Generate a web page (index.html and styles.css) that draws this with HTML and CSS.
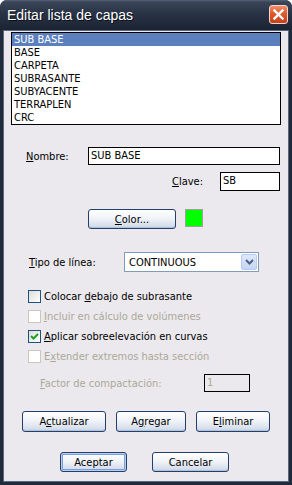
FILE: index.html
```html
<!doctype html>
<html lang="es">

<head>
  <meta charset="utf-8" />
  <title>Editar lista de capas</title>
  <link rel="stylesheet" href="styles.css">
</head>

<body>
  <div class="window">
    <div class="titlebar">
      <span class="title">Editar lista de capas</span>
      <span class="close">
        <svg width="11" height="11" viewBox="0 0 11 11">
          <path d="M1.5 1.5 L9.5 9.5 M9.5 1.5 L1.5 9.5" stroke="#fff" stroke-width="2.4" stroke-linecap="square" />
        </svg>
      </span>
    </div>

    <div class="client">
      <div class="listbox">
        <div class="item selected">SUB BASE</div>
        <div class="item">BASE</div>
        <div class="item">CARPETA</div>
        <div class="item">SUBRASANTE</div>
        <div class="item">SUBYACENTE</div>
        <div class="item">TERRAPLEN</div>
        <div class="item">CRC</div>
      </div>

      <div class="row row-nombre">
        <label class="lbl"><u>N</u>ombre:</label>
        <div class="field">SUB BASE</div>
      </div>

      <div class="row row-clave">
        <label class="lbl"><u>C</u>lave:</label>
        <div class="field">SB</div>
      </div>

      <div class="row row-color">
        <button class="btn btn-color"><u>C</u>olor...</button>
        <span class="swatch"></span>
      </div>

      <div class="row row-tipo">
        <label class="lbl"><u>T</u>ipo de línea:</label>
        <div class="combo">
          <span class="combo-text">CONTINUOUS</span>
          <span class="combo-btn">
            <svg width="9" height="6" viewBox="0 0 9 6">
              <path d="M1 1 L4.5 4.5 L8 1" fill="none" stroke="#4d6185" stroke-width="2" />
            </svg>
          </span>
        </div>
      </div>

      <div class="checks">
        <div class="check">
          <span class="box"></span>
          <span>Colocar <u>d</u>ebajo de subrasante</span>
        </div>
        <div class="check disabled">
          <span class="box"></span>
          <span><u>I</u>ncluir en cálculo de volúmenes</span>
        </div>
        <div class="check">
          <span class="box">
            <svg width="11" height="11" viewBox="0 0 11 11">
              <path d="M2 5 L4.5 7.5 L9 3" fill="none" stroke="#21a121" stroke-width="2" />
            </svg>
          </span>
          <span><u>A</u>plicar sobreelevación en curvas</span>
        </div>
        <div class="check disabled">
          <span class="box"></span>
          <span>E<u>x</u>tender extremos hasta sección</span>
        </div>
      </div>

      <div class="row row-factor disabled">
        <label class="lbl"><u>F</u>actor de compactación:</label>
        <div class="field">1</div>
      </div>

      <div class="row row-actions">
        <button class="btn btn-actualizar">A<u>c</u>tualizar</button>
        <button class="btn btn-agregar">A<u>g</u>regar</button>
        <button class="btn btn-eliminar">E<u>l</u>iminar</button>
      </div>

      <div class="row row-bottom">
        <button class="btn btn-default btn-aceptar">Aceptar</button>
        <button class="btn btn-cancelar">Cancelar</button>
      </div>
    </div>
  </div>
</body>

</html>
```

FILE: styles.css
```css
html,
body {
  margin: 0;
  height: 100%;
}

body {
  font-family: "DejaVu Sans Condensed", "Liberation Sans", Arial, sans-serif;
  font-size: 11px;
  color: #000;
}

.window {
  width: 292px;
  height: 485px;
  box-sizing: border-box;
  display: flex;
  flex-direction: column;
  background: #1f2a3a;
  border-radius: 7px 7px 0 0;
  padding: 0 3px 3px 3px;
}

.titlebar {
  height: 30px;
  margin: 0 -3px;
  padding: 0 4px 1px 7px;
  box-sizing: border-box;
  display: flex;
  align-items: center;
  justify-content: space-between;
  border-radius: 7px 7px 0 0;
  background: linear-gradient(#56627a 0, #3a4558 2px, #2b3548 40%, #1b2332 100%);
}

.title {
  color: #fff;
  font-family: "Liberation Sans", Arial, sans-serif;
  font-size: 14px;
  text-shadow: 1px 1px 0 #0b0f18;
}

.close {
  width: 19px;
  height: 19px;
  box-sizing: border-box;
  border: 1px solid #f4d6cc;
  border-radius: 3px;
  background: linear-gradient(#f0906c, #e0582c 45%, #c8401c);
  display: flex;
  align-items: center;
  justify-content: center;
}

.client {
  flex: 1;
  background: #ebe9ed;
  border: 1px solid #5a6880;
  display: flex;
  flex-direction: column;
}

.listbox {
  width: 270px;
  height: 93px;
  box-sizing: border-box;
  margin: 1px 0 0 7px;
  border: 1px solid #000;
  background: #fff;
}

.item {
  height: 13px;
  line-height: 13px;
  padding-left: 2px;
}

.item.selected {
  background: #5c80be;
  color: #fff;
}

.row {
  display: flex;
  align-items: center;
}

.lbl {
  flex: none;
}

.field {
  box-sizing: border-box;
  border: 1px solid #000;
  background: #fff;
  height: 100%;
  line-height: 15px;
  padding-left: 2px;
}

.row-nombre {
  margin-top: 22px;
  height: 18px;
  padding-left: 22px;
}

.row-nombre .lbl {
  width: 62px;
}

.row-nombre .field {
  width: 192px;
}

.row-clave {
  margin-top: 7px;
  height: 19px;
  padding-left: 168px;
}

.row-clave .lbl {
  width: 48px;
}

.row-clave .field {
  width: 60px;
}

.btn {
  font-family: inherit;
  font-size: 11px;
  color: #000;
  height: 100%;
  padding: 0;
  box-sizing: border-box;
  border: 1px solid #23406c;
  border-radius: 3px;
  background: linear-gradient(#ffffff, #f1f3f8 45%, #d8e0ec 85%, #c3cfe2);
  box-shadow: inset 0 -1px 0 #b4c2d8;
}

.row-color {
  margin-top: 18px;
  height: 20px;
  padding-left: 84px;
  align-items: flex-start;
}

.btn-color {
  width: 88px;
}

.swatch {
  width: 18px;
  height: 18px;
  box-sizing: border-box;
  margin-left: 9px;
  border: 1px solid #a0a0a0;
  background: #00ff00;
}

.row-tipo {
  margin-top: 23px;
  height: 20px;
  padding-left: 25px;
}

.row-tipo .lbl {
  width: 95px;
}

.combo {
  width: 135px;
  height: 100%;
  box-sizing: border-box;
  border: 1px solid #7f9db9;
  background: #fff;
  display: flex;
  align-items: center;
  justify-content: space-between;
  padding: 1px;
}

.combo-text {
  padding-left: 3px;
}

.combo-btn {
  width: 16px;
  height: 16px;
  box-sizing: border-box;
  border: 1px solid #b9c9ef;
  border-radius: 2px;
  background: linear-gradient(#dfe8fa, #c5d5f5);
  display: flex;
  align-items: center;
  justify-content: center;
}

.checks {
  margin-top: 18px;
  padding-left: 24px;
  display: flex;
  flex-direction: column;
  gap: 7px;
}

.check {
  display: flex;
  align-items: center;
  gap: 3px;
  height: 13px;
}

.box {
  width: 13px;
  height: 13px;
  box-sizing: border-box;
  border: 1px solid #1c5180;
  background: linear-gradient(135deg, #dcdcd7, #ffffff);
  display: flex;
  align-items: center;
  justify-content: center;
}

.disabled {
  color: #aca899;
}

.check.disabled .box {
  border-color: #cac8bb;
  background: #fff;
}

.row-factor {
  margin-top: 11px;
  height: 18px;
  padding-left: 36px;
}

.row-factor .lbl {
  width: 164px;
}

.row-factor .field {
  width: 46px;
  background: #ebe9ed;
  color: #aca899;
}

.row-actions {
  margin-top: 19px;
  height: 21px;
  padding-left: 18px;
  gap: 10px;
}

.btn-actualizar {
  width: 84px;
}

.btn-agregar {
  width: 70px;
}

.btn-eliminar {
  width: 74px;
}

.row-bottom {
  margin-top: 20px;
  height: 20px;
  padding-left: 56px;
  gap: 25px;
}

.btn-aceptar {
  width: 67px;
}

.btn-cancelar {
  width: 77px;
}

.btn-default {
  box-shadow: inset 0 0 0 1px #b8cdf2, inset 0 0 0 2px #7c9fdc;
}
```
